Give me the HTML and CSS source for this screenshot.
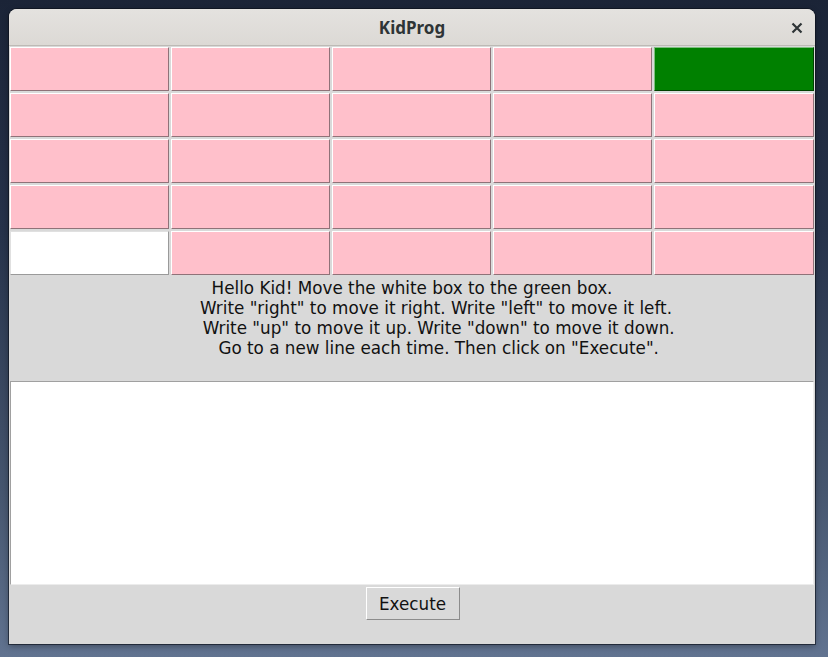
FILE: index.html
```html
<!DOCTYPE html>
<html>
<head>
<meta charset="utf-8">
<title>KidProg</title>
<link rel="stylesheet" href="styles.css">
</head>
<body>
<div class="window">
  <div class="titlebar">
    <span class="title">KidProg</span>
    <svg class="close" width="12" height="12" viewBox="0 0 12 12"><path d="M1.5 1.5 L10.5 10.5 M10.5 1.5 L1.5 10.5" stroke="#2e3436" stroke-width="2.2" stroke-linecap="butt"/></svg>
  </div>
  <div class="grid">
    <div class="cell"></div><div class="cell"></div><div class="cell"></div><div class="cell"></div><div class="cell goal"></div>
    <div class="cell"></div><div class="cell"></div><div class="cell"></div><div class="cell"></div><div class="cell"></div>
    <div class="cell"></div><div class="cell"></div><div class="cell"></div><div class="cell"></div><div class="cell"></div>
    <div class="cell"></div><div class="cell"></div><div class="cell"></div><div class="cell"></div><div class="cell"></div>
    <div class="cell player"></div><div class="cell"></div><div class="cell"></div><div class="cell"></div><div class="cell"></div>
  </div>
  <div class="info"><div class="line">Hello Kid! Move the white box to the green box.</div><div class="line">         Write "right" to move it right. Write "left" to move it left.</div><div class="line">          Write "up" to move it up. Write "down" to move it down.</div><div class="line">          Go to a new line each time. Then click on "Execute".</div></div>
  <textarea class="code"></textarea>
  <div class="actions">
    <button class="exec">Execute</button>
  </div>
</div>
</body>
</html>
```
FILE: styles.css
```css
html, body {
  margin: 0;
  padding: 0;
}
body {
  width: 828px;
  height: 657px;
  overflow: hidden;
  background: linear-gradient(180deg, #1b2437 0%, #26324a 35%, #46566f 75%, #617390 100%);
  padding: 9px 0 0 9px;
  box-sizing: border-box;
  font-family: "DejaVu Sans", sans-serif;
}
.window {
  width: 806px;
  height: 635px;
  background: #d9d9d9;
  border-radius: 8px 8px 0 0;
  box-shadow: 0 0 0 1px rgba(10, 15, 25, 0.6), 0 2px 6px rgba(0, 0, 0, 0.35);
  display: flex;
  flex-direction: column;
  overflow: hidden;
}
.titlebar {
  height: 36px;
  flex: none;
  background: linear-gradient(180deg, #e4e2df 0%, #dcd9d5 100%);
  border-bottom: 1px solid #bdbab5;
  position: relative;
  display: flex;
  align-items: center;
  justify-content: center;
}
.title {
  font-family: "Noto Sans", sans-serif;
  font-weight: bold;
  font-size: 17px;
  color: #2e3436;
}
.close {
  position: absolute;
  right: 12px;
  top: 13px;
}
.grid {
  flex: none;
  display: grid;
  grid-template-columns: 161px 161px 161px 161px 162px;
  grid-template-rows: repeat(5, 46px);
}
.cell {
  margin: 1px;
  background: #ffc0cb;
  border-top: 1px solid #ffffff;
  border-left: 1px solid #ffffff;
  border-right: 1px solid #8f7278;
  border-bottom: 1px solid #8f7278;
}
.cell.goal {
  background: #008000;
  border-top-color: #7fbf7f;
  border-left-color: #7fbf7f;
  border-right-color: #004000;
  border-bottom-color: #004000;
}
.cell.player {
  background: #ffffff;
  border-top-color: #e0e0e0;
  border-left-color: #e0e0e0;
  border-right-color: #9a9a9a;
  border-bottom-color: #9a9a9a;
}
.info {
  flex: none;
  height: 105px;
  box-sizing: border-box;
  padding-top: 2px;
  font-size: 16.8px;
  line-height: 20px;
  color: #111;
}
.line {
  white-space: pre;
  text-align: center;
}
.code {
  flex: none;
  display: block;
  margin: 0 1px;
  width: 804px;
  height: 204px;
  box-sizing: border-box;
  background: #fff;
  border-top: 1px solid #a0a0a0;
  border-left: 1px solid #a0a0a0;
  border-right: 1px solid #ececec;
  border-bottom: 1px solid #ececec;
  resize: none;
  outline: none;
  padding: 0;
}
.actions {
  flex: 1;
  display: flex;
  justify-content: center;
  align-items: flex-start;
  padding-top: 2px;
}
.exec {
  width: 94px;
  height: 33px;
  background: #d9d9d9;
  font-family: "DejaVu Sans", sans-serif;
  font-size: 16.8px;
  color: #111;
  border-top: 1px solid #ffffff;
  border-left: 1px solid #ffffff;
  border-right: 1px solid #8c8c8c;
  border-bottom: 1px solid #8c8c8c;
  border-radius: 0;
  padding: 0;
  margin-left: 1px;
}
```
